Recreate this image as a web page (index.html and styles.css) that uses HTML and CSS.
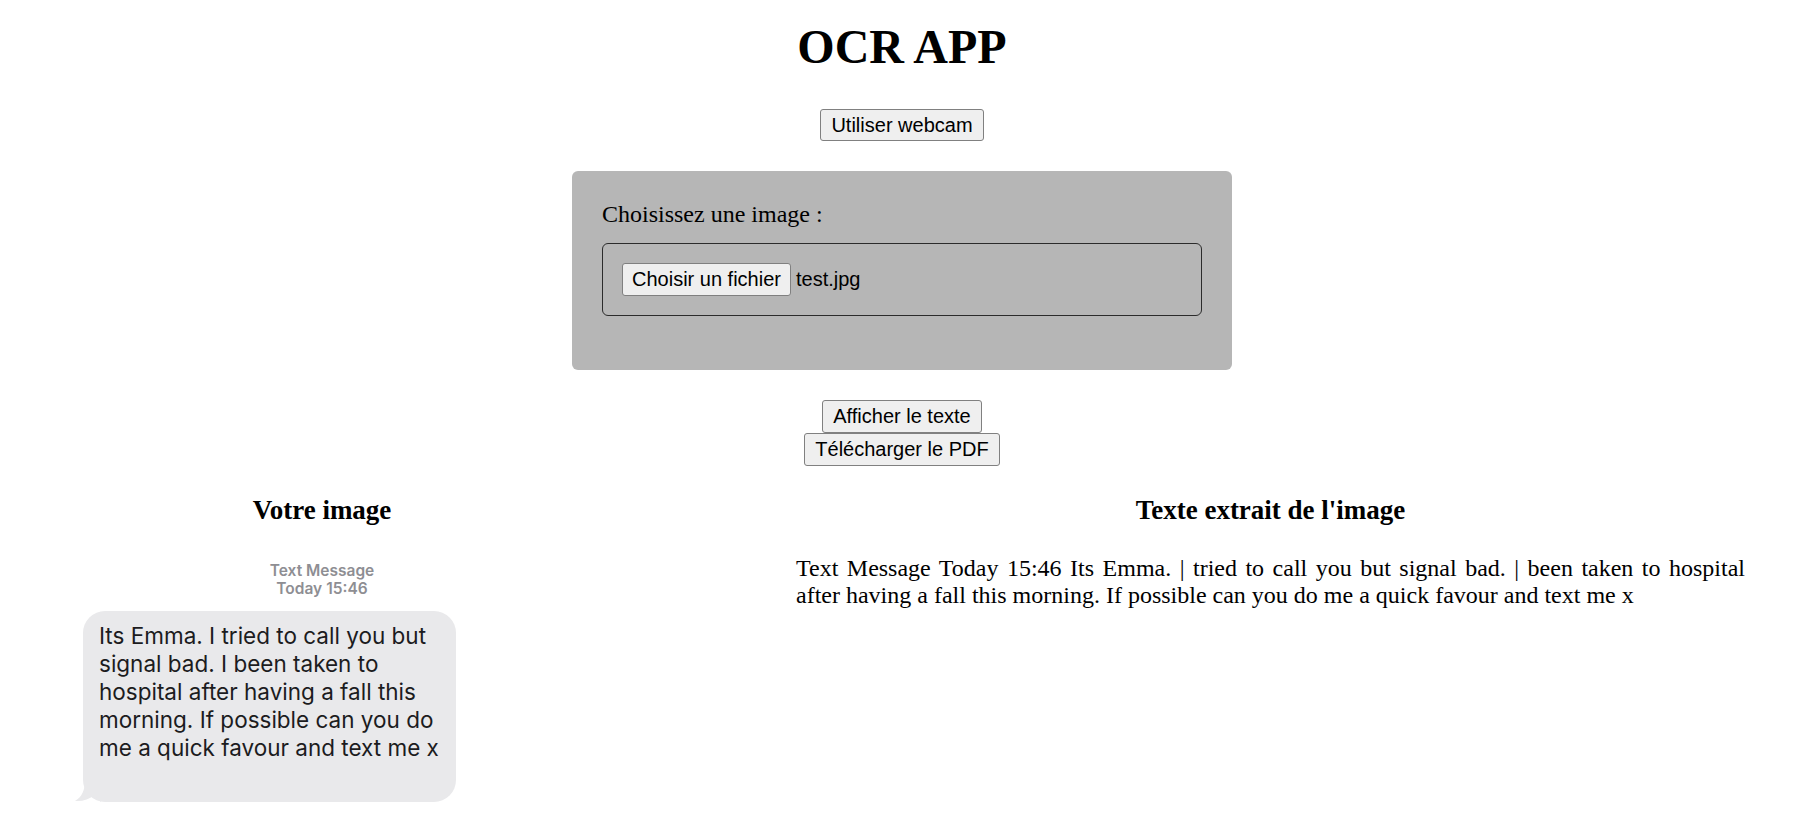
FILE: index.html
```html
<!DOCTYPE html>
<html lang="fr">
<head>
<meta charset="utf-8">
<title>OCR APP</title>
<link rel="stylesheet" href="styles.css">
</head>
<body>
<main class="app">
  <h1 class="title">OCR APP</h1>
  <button class="btn btn-webcam" type="button">Utiliser webcam</button>

  <section class="upload">
    <p class="upload-label">Choisissez une image :</p>
    <div class="file-field">
      <span class="btn file-btn">Choisir un fichier</span><span class="file-name">test.jpg</span>
    </div>
  </section>

  <div class="actions">
    <button class="btn" type="button">Afficher le texte</button>
    <button class="btn" type="button">Télécharger le PDF</button>
  </div>

  <section class="results">
    <div class="col col-image">
      <h2 class="col-title">Votre image</h2>
      <div class="shot">
        <div class="shot-meta">Text Message<br>Today 15:46</div>
        <div class="bubble">
          <span class="line">Its Emma. I tried to call you but</span>
          <span class="line">signal bad. I been taken to</span>
          <span class="line">hospital after having a fall this</span>
          <span class="line">morning. If possible can you do</span>
          <span class="line">me a quick favour and text me x</span>
          <svg class="tail" width="26" height="22" viewBox="0 0 26 22" aria-hidden="true"><path d="M10 0 C10 10 7 17 0 21 C8 21.5 14 19.5 19 15 L26 22 L26 0 Z" fill="#e9e9eb"/></svg>
        </div>
      </div>
    </div>
    <div class="col col-text">
      <h2 class="col-title">Texte extrait de l'image</h2>
      <p class="ocr-text">Text Message Today 15:46 Its Emma. | tried to call you but signal bad. | been taken to hospital after having a fall this morning. If possible can you do me a quick favour and text me x</p>
    </div>
  </section>
</main>
</body>
</html>
```

FILE: styles.css
```css
html, body {
  margin: 0;
  padding: 0;
  background: #ffffff;
}

body {
  font-family: "Liberation Serif", "Times New Roman", serif;
  font-size: 16px;
  color: #000;
}

.app {
  display: flex;
  flex-direction: column;
  align-items: center;
  padding: 19px 0 0 4px;
}

.title {
  margin: 0;
  font-size: 48px;
  font-weight: bold;
  line-height: normal;
}

.btn {
  display: inline-block;
  font-family: "Liberation Sans", Arial, sans-serif;
  font-size: 20px;
  line-height: 23px;
  color: #000;
  background: #efefef;
  border: 1px solid #808080;
  border-radius: 3px;
  padding: 4px 10px;
  margin: 0;
}

.btn-webcam {
  margin-top: 35px;
  padding-top: 3.5px;
  padding-bottom: 3.5px;
}

.upload {
  margin-top: 30px;
  width: 600px;
  padding: 30px 30px 54px;
  background: #b6b6b6;
  border-radius: 6px;
}

.upload-label {
  margin: 0;
  font-size: 24px;
  line-height: normal;
}

.file-field {
  margin-top: 15px;
  display: flex;
  align-items: center;
  padding: 19px;
  border: 1px solid #2b2b2b;
  border-radius: 6px;
}

.file-btn {
  padding-left: 9px;
  padding-right: 9px;
}

.file-name {
  margin-left: 5px;
  font-family: "Liberation Sans", Arial, sans-serif;
  font-size: 20px;
}

.actions {
  margin-top: 30px;
  display: flex;
  flex-direction: column;
  align-items: center;
}

.results {
  align-self: stretch;
  margin: 29px 0 0 -4px;
  display: grid;
  grid-template-columns: 644px 1fr;
}

.col-title {
  margin: 0;
  font-size: 27px;
  font-weight: bold;
  line-height: normal;
  text-align: center;
}

.col-text {
  padding: 0 55px 0 152px;
}

.ocr-text {
  margin: 29px 0 0;
  font-size: 24px;
  line-height: normal;
  text-align: justify;
}

.shot {
  width: 520px;
  margin: 30px auto 0;
  padding-top: 6px;
  font-family: Inter, "Liberation Sans", sans-serif;
}

.shot-meta {
  text-align: center;
  font-size: 15.5px;
  line-height: 18px;
  font-weight: 600;
  color: #8e8e93;
}

.bubble {
  position: relative;
  margin: 13px 0 0 21px;
  width: 373px;
  box-sizing: border-box;
  padding: 11px 8px 40px 16px;
  background: #e9e9eb;
  border-radius: 22px;
  font-size: 22.5px;
  line-height: 28px;
  color: #1c1c1e;
}

.line {
  display: block;
  white-space: nowrap;
}

.tail {
  position: absolute;
  left: -8px;
  bottom: 0;
}
```
